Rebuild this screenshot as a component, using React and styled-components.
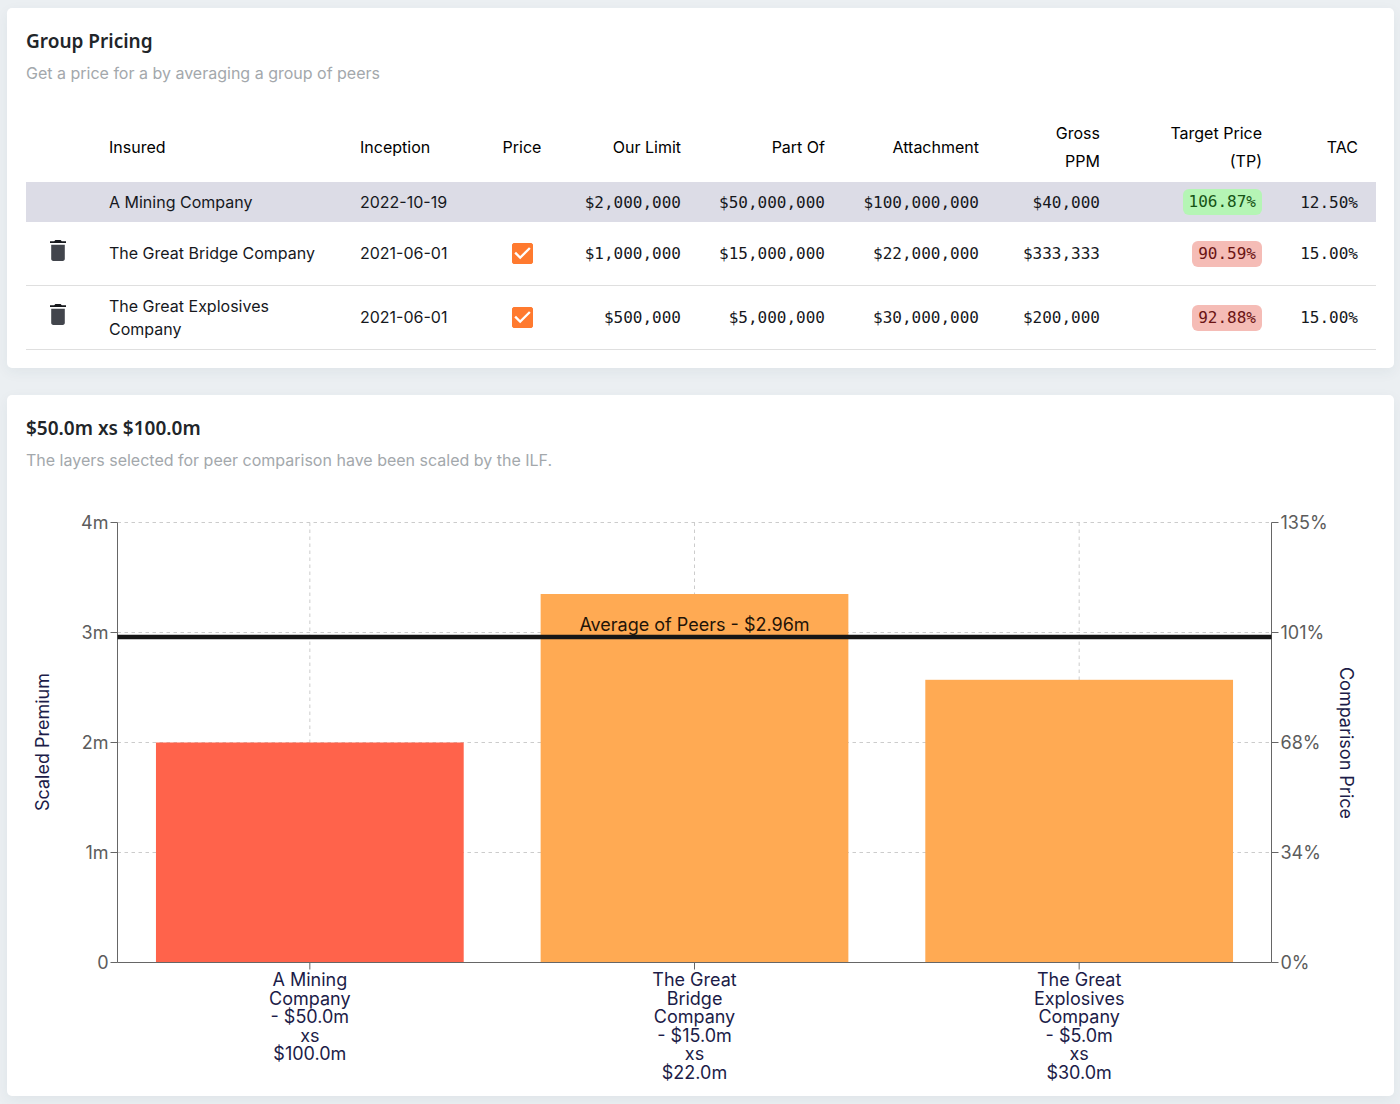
import React, {useLayoutEffect, useRef, useState} from 'react';
import styled, {createGlobalStyle} from 'styled-components';

const GlobalStyle = createGlobalStyle`
    body {
        margin: 0;
        background: #ebeff2;
        color: #16181d;
        font-family: Inter, "Liberation Sans", sans-serif;
        font-size: 16px;
    }
`;

const Page = styled.main`
    display: flex;
    flex-direction: column;
    gap: 27px;
    padding: 8px 6px 8px 7px;
`;

const Card = styled.section`
    padding: 18px 18px 18px 19px;
    border-radius: 5px;
    background: #fff;
    box-shadow: 0 4px 14px rgba(40, 60, 80, 0.06);
`;

const Title = styled.h2`
    margin: 0 0 5px;
    color: #212529;
    font-family: "Noto Sans", sans-serif;
    font-size: 19px;
    font-weight: 600;
    line-height: 30px;
`;

const Subtitle = styled.p`
    margin: 0 0 30px;
    color: #a3a8ac;
    line-height: 24px;
`;

const Table = styled.table`
    width: 100%;
    table-layout: fixed;
    border-collapse: separate;
    border-spacing: 0;
`;

const Col = styled.col`
    width: ${props => props.$width}px;
`;

const HeadCell = styled.th`
    padding: 4px 18px 7px;
    color: #000;
    font-weight: 400;
    line-height: 28px;
    text-align: ${props => props.$align || 'left'};
    white-space: pre-line;
`;

const Row = styled.tr`
    height: ${props => (props.$selected ? 40 : 64)}px;
    background: ${props => (props.$selected ? '#dcdce6' : 'none')};

    td {
        border-bottom: ${props => (props.$selected ? 'none' : '1px solid #dfdfdf')};
    }
`;

const Cell = styled.td`
    box-sizing: border-box;
    padding: 0 18px;
    line-height: 23px;
    text-align: ${props => props.$align || 'left'};
`;

const NumberCell = styled(Cell)`
    padding-left: 4px;
    font-family: "DejaVu Sans Mono", monospace;
    text-align: right;
`;

const Badge = styled.span`
    display: inline-block;
    padding: 0 6px;
    border-radius: 6px;
    background: ${props => (props.$good ? '#b5f5b5' : '#f5bcb6')};
    color: ${props => (props.$good ? '#155415' : '#6b1414')};
    line-height: 26px;
`;

const IconButton = styled.button`
    display: block;
    margin: 0 0 6px 6px;
    padding: 0;
    border: none;
    background: none;
    cursor: pointer;

    svg {
        display: block;
    }
`;

const CheckLabel = styled.label`
    display: inline-grid;
    margin-bottom: 2px;
    vertical-align: middle;

    > * {
        grid-area: 1 / 1;
    }

    svg {
        pointer-events: none;
    }
`;

const CheckInput = styled.input`
    appearance: none;
    width: 21px;
    height: 21px;
    margin: 0;
    border: 1px solid #ff7a2f;
    border-radius: 2px;

    &:checked {
        background: #ff7a2f;
    }
`;

const ChartBox = styled.div`
    height: 576px;

    svg {
        display: block;
        overflow: visible;
    }
`;

const ChartText = styled.text`
    fill: ${props => props.$color || '#5c5c5c'};
    font-size: 18px;
    text-anchor: ${props => props.$anchor || 'middle'};
`;

const columns = [
    {title: '', width: 65},
    {title: 'Insured', width: 251},
    {title: 'Inception', width: 133},
    {title: 'Price', width: 94, align: 'center'},
    {title: 'Our Limit', width: 130, align: 'right'},
    {title: 'Part Of', width: 144, align: 'right'},
    {title: 'Attachment', width: 154, align: 'right'},
    {title: 'Gross\nPPM', width: 121, align: 'right'},
    {title: 'Target Price\n(TP)', width: 162, align: 'right'},
    {title: 'TAC', width: 96, align: 'right'},
];

const layers = [
    {
        insured: 'A Mining Company', inception: '2022-10-19', limit: '$2,000,000', partOf: '$50,000,000',
        attachment: '$100,000,000', ppm: '$40,000', target: '106.87%', tac: '12.50%', good: true, selected: true,
    },
    {
        insured: 'The Great Bridge Company', inception: '2021-06-01', limit: '$1,000,000', partOf: '$15,000,000',
        attachment: '$22,000,000', ppm: '$333,333', target: '90.59%', tac: '15.00%',
    },
    {
        insured: 'The Great Explosives Company', inception: '2021-06-01', limit: '$500,000', partOf: '$5,000,000',
        attachment: '$30,000,000', ppm: '$200,000', target: '92.88%', tac: '15.00%',
    },
];

const bars = [
    {value: 2, color: '#ff634b', label: ['A Mining', 'Company', '- $50.0m', 'xs', '$100.0m']},
    {value: 3.35, color: '#ffaa53', label: ['The Great', 'Bridge', 'Company', '- $15.0m', 'xs', '$22.0m']},
    {value: 2.57, color: '#ffaa53', label: ['The Great', 'Explosives', 'Company', '- $5.0m', 'xs', '$30.0m']},
];

const ticks = [
    {value: 4, left: '4m', right: '135%'},
    {value: 3, left: '3m', right: '101%'},
    {value: 2, left: '2m', right: '68%'},
    {value: 1, left: '1m', right: '34%'},
    {value: 0, left: '0', right: '0%'},
];

const TrashIcon = () => (
    <svg width="16" height="21" viewBox="0 0 16 21" aria-hidden="true">
        <path d="M0 1.2h4.2L5.4 0h5.2l1.2 1.2H16v1.9H0z" fill="#16181c" />
        <path d="M1.2 4.7h13.6v14.1c0 1.3-.8 2.2-2.1 2.2H3.3c-1.3 0-2.1-.9-2.1-2.2z" fill="#42454c" />
    </svg>
);

const Check = ({label}) => (
    <CheckLabel>
        <CheckInput type="checkbox" defaultChecked aria-label={label} />
        <svg width="21" height="21" viewBox="3 3 18 18" aria-hidden="true">
            <path d="M10 17l-5-5 1.41-1.41L10 14.17l7.59-7.59L19 8z" fill="#fff" />
        </svg>
    </CheckLabel>
);

const LayerRow = ({data}) => (
    <Row $selected={data.selected}>
        <Cell>
            {!data.selected && (
                <IconButton type="button" aria-label={'Remove ' + data.insured}>
                    <TrashIcon />
                </IconButton>
            )}
        </Cell>
        <Cell>{data.insured}</Cell>
        <Cell>{data.inception}</Cell>
        <Cell $align="center">
            {!data.selected && <Check label={'Price ' + data.insured} />}
        </Cell>
        <NumberCell>{data.limit}</NumberCell>
        <NumberCell>{data.partOf}</NumberCell>
        <NumberCell>{data.attachment}</NumberCell>
        <NumberCell>{data.ppm}</NumberCell>
        <NumberCell><Badge $good={data.good}>{data.target}</Badge></NumberCell>
        <NumberCell>{data.tac}</NumberCell>
    </Row>
);

const PremiumChart = () => {
    const box = useRef(null);
    const [width, setWidth] = useState(0);

    useLayoutEffect(() => {
        const measure = () => setWidth(box.current.clientWidth);
        measure();
        window.addEventListener('resize', measure);
        return () => window.removeEventListener('resize', measure);
    }, []);

    // half pixels keep the one pixel axis lines sharp
    const left = 91.5;
    const right = width - 104.5;
    const bottom = 460.5;
    const unit = 110;
    const top = bottom - unit * 4;
    const band = (right - left) / bars.length;
    const y = value => bottom - value * unit;
    const center = index => left + band * (index + 0.5);
    const average = 2.96;

    return (
        <ChartBox ref={box}>
            {width > 0 && (
                <svg width={width} height="576" role="img" aria-label="Scaled premium by layer">
                    <g stroke="#ccc" strokeDasharray="3.5 3.5">
                        {ticks.map(t => <line key={t.value} x1={left} x2={right} y1={y(t.value)} y2={y(t.value)} />)}
                        {bars.map((b, i) => <line key={i} x1={center(i)} x2={center(i)} y1={top} y2={bottom} />)}
                    </g>
                    {bars.map((b, i) => (
                        <rect
                            key={i}
                            x={center(i) - band * 0.4}
                            y={y(b.value)}
                            width={band * 0.8}
                            height={b.value * unit}
                            fill={b.color} />
                    ))}
                    <g stroke="#666">
                        <line x1={left} x2={left} y1={top} y2={bottom} />
                        <line x1={right} x2={right} y1={top} y2={bottom} />
                        <line x1={left} x2={right} y1={bottom} y2={bottom} />
                        {ticks.map(t => (
                            <path key={t.value} d={`M${left - 7} ${y(t.value)}h7M${right} ${y(t.value)}h7`} />
                        ))}
                        {bars.map((b, i) => <path key={i} d={`M${center(i)} ${bottom}v7`} />)}
                    </g>
                    <line x1={left} x2={right} y1={y(average)} y2={y(average)} stroke="#161616" strokeWidth="4.5" />
                    <ChartText x={(left + right) / 2} y={129} $color="#1f1408">Average of Peers - $2.96m</ChartText>
                    {ticks.map(t => (
                        <React.Fragment key={t.value}>
                            <ChartText x={left - 9} y={y(t.value)} dy="0.355em" $anchor="end">{t.left}</ChartText>
                            <ChartText x={right + 9} y={y(t.value)} dy="0.355em" $anchor="start">{t.right}</ChartText>
                        </React.Fragment>
                    ))}
                    {bars.map((b, i) => (
                        <ChartText key={i} $color="#1c1c48">
                            {b.label.map((line, n) => (
                                <tspan key={line} x={center(i)} y={484 + Math.round(n * 18.5)}>{line}</tspan>
                            ))}
                        </ChartText>
                    ))}
                    <ChartText transform="translate(23 240) rotate(-90)" $color="#1c1c48">Scaled Premium</ChartText>
                    <ChartText transform={`translate(${width - 36} 241) rotate(90)`} $color="#1c1c48">
                        Comparison Price
                    </ChartText>
                </svg>
            )}
        </ChartBox>
    );
};

const App = () => (
    <>
        <GlobalStyle />
        <Page>
            <Card>
                <Title>Group Pricing</Title>
                <Subtitle>Get a price for a by averaging a group of peers</Subtitle>
                <Table>
                    <colgroup>
                        {columns.map(c => <Col key={c.title} $width={c.width} />)}
                    </colgroup>
                    <thead>
                        <tr>
                            {columns.map(c => <HeadCell key={c.title} $align={c.align}>{c.title}</HeadCell>)}
                        </tr>
                    </thead>
                    <tbody>
                        {layers.map(l => <LayerRow key={l.insured} data={l} />)}
                    </tbody>
                </Table>
            </Card>
            <Card>
                <Title>$50.0m xs $100.0m</Title>
                <Subtitle>The layers selected for peer comparison have been scaled by the ILF.</Subtitle>
                <PremiumChart />
            </Card>
        </Page>
    </>
);

export default App;
